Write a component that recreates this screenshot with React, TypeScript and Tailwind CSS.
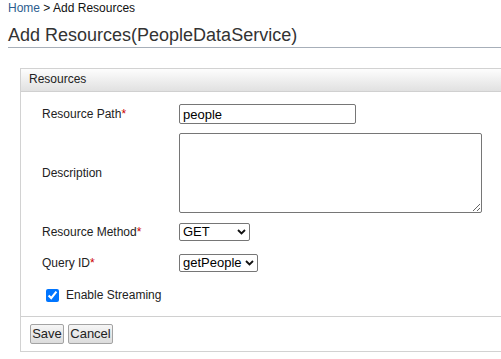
import { useState } from "react";

function Req() {
  return <span className="text-[#cc0000]">*</span>;
}

function Chevron() {
  return (
    <svg
      className="pointer-events-none absolute right-[4px] top-1/2 -translate-y-1/2"
      width="9"
      height="6"
      viewBox="0 0 9 6"
      fill="none"
    >
      <path d="M1 1l3.5 3.5L8 1" stroke="#111" strokeWidth="1.8" />
    </svg>
  );
}

function SelectBox({ value, options, width }: { value: string; options: string[]; width: string }) {
  return (
    <div className={`relative h-[18px] ${width}`}>
      <select
        defaultValue={value}
        className="h-full w-full appearance-none rounded-[2px] border border-[#767676] bg-white pl-[3px] text-[13px] leading-[16px] text-black outline-none"
      >
        {options.map(o => (
          <option key={o}>{o}</option>
        ))}
      </select>
      <Chevron />
    </div>
  );
}

export default function App() {
  const [path, setPath] = useState("people");
  const [streaming, setStreaming] = useState(true);

  return (
    <div className="h-[359px] w-[501px] overflow-hidden bg-white font-['Liberation_Sans',Arial,sans-serif] text-[#333]">
      <div className="px-2 pt-[1px] text-[12px] leading-[15px] text-[#111]">
        <a href="#" className="text-[#2d5d8f]">Home</a> &gt; Add Resources
      </div>
      <h1 className="ml-2 mt-[8px] border-b border-[#a7afb9] pb-[1px] text-[18px] font-normal leading-[22px] text-[#333]">
        Add Resources(PeopleDataService)
      </h1>

      <div className="ml-[20px] mt-[20px] w-[490px] border border-[#d2d2d2]">
        <div className="h-[23px] border-b border-[#d0d0d0] bg-gradient-to-b from-[#fdfdfd] to-[#e1e1e1] pl-[8px] text-[12px] leading-[20px] text-[#222]">
          Resources
        </div>

        <div className="pl-[21px] pt-[12px] text-[12px] text-[#222]">
          <div className="grid grid-cols-[137px_1fr] items-center">
            <label className="h-[20px] leading-[20px]">
              Resource Path<Req />
            </label>
            <input
              value={path}
              onChange={e => setPath(e.target.value)}
              className="h-[20px] w-[177px] rounded-[2px] border border-[#767676] bg-white px-[3px] text-[13px] text-black outline-none"
            />

            <label className="mt-[9px]">Description</label>
            <textarea className="mt-[9px] h-[80px] w-[303px] rounded-[2px] border border-[#767676] bg-white outline-none" />

            <label className="mt-[10px] leading-[18px]">
              Resource Method<Req />
            </label>
            <div className="mt-[10px]">
              <SelectBox value="GET" options={["GET", "POST", "PUT", "DELETE"]} width="w-[71px]" />
            </div>

            <label className="mt-[13px] leading-[18px]">
              Query ID<Req />
            </label>
            <div className="mt-[13px]">
              <SelectBox value="getPeople" options={["getPeople"]} width="w-[79px]" />
            </div>
          </div>

          <label className="mt-[13px] flex h-[20px] items-center gap-[7px] pl-[4px]">
            <input
              type="checkbox"
              checked={streaming}
              onChange={e => setStreaming(e.target.checked)}
              className="h-[13px] w-[13px] accent-[#0075ff]"
            />
            <span>Enable Streaming</span>
          </label>
          <div className="h-[11px]" />
        </div>

        <div className="flex gap-[4px] border-t border-[#d0d0d0] pb-[7px] pl-[9px] pt-[7px]">
          <button className="h-[20px] w-[34px] rounded-[2px] border border-[#a3a3a3] bg-gradient-to-b from-[#f6f6f6] to-[#dcdcdc] text-[13px] leading-[18px] text-[#222]">
            Save
          </button>
          <button className="h-[20px] w-[45px] rounded-[2px] border border-[#a3a3a3] bg-gradient-to-b from-[#f6f6f6] to-[#dcdcdc] text-[13px] leading-[18px] text-[#222]">
            Cancel
          </button>
        </div>
      </div>
    </div>
  );
}
